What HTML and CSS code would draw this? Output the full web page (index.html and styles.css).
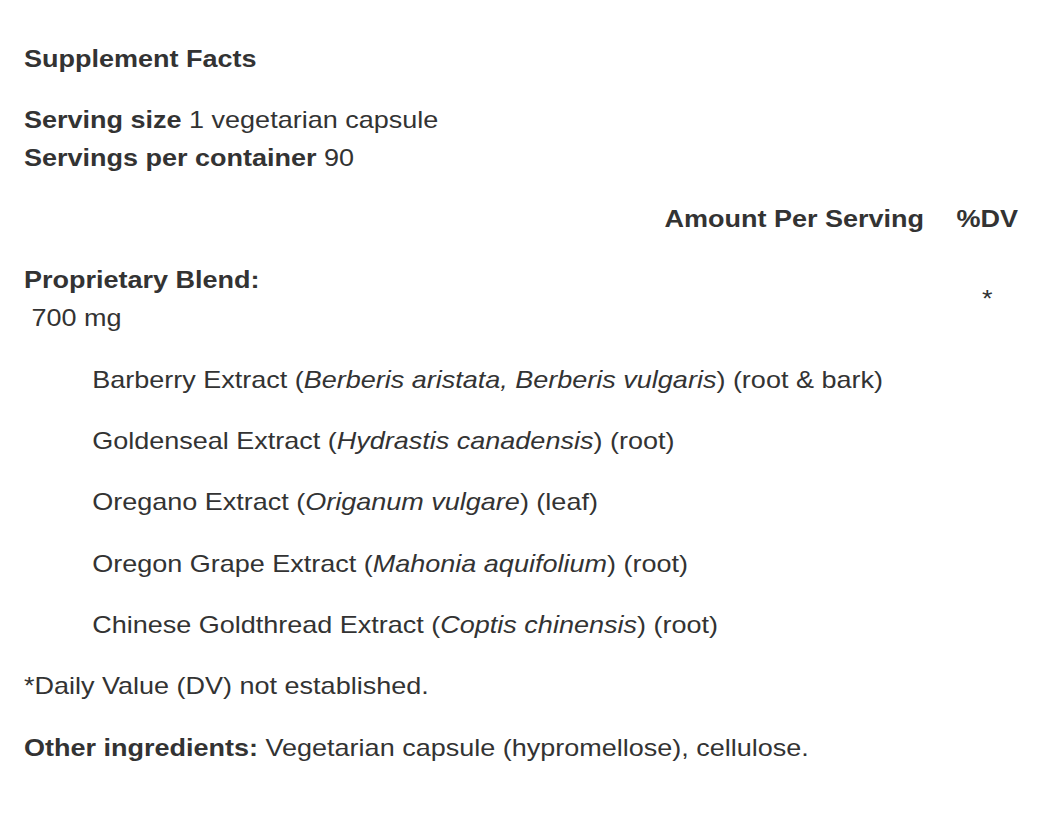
FILE: index.html
```html
<!DOCTYPE html>
<html lang="en">
<head>
<meta charset="utf-8">
<title>Supplement Facts</title>
<link rel="stylesheet" href="styles.css">
</head>
<body>
<main class="page">
  <div class="sheet">
    <h2 class="title">Supplement Facts</h2>
    <p class="serving"><b>Serving size</b> 1 vegetarian capsule<br><b>Servings per container</b> 90</p>
    <div class="facts">
      <div class="row head"><span class="amt">Amount Per Serving</span><span class="dv">%DV</span></div>
      <div class="row blend"><div class="name"><b>Proprietary Blend:</b><br>&nbsp;700 mg</div><span class="dv">*</span></div>
      <div class="row ing"><span class="name">Barberry Extract (<i>Berberis aristata, Berberis vulgaris</i>) (root &amp; bark)</span></div>
      <div class="row ing"><span class="name">Goldenseal Extract (<i>Hydrastis canadensis</i>) (root)</span></div>
      <div class="row ing"><span class="name">Oregano Extract (<i>Origanum vulgare</i>) (leaf)</span></div>
      <div class="row ing"><span class="name">Oregon Grape Extract (<i>Mahonia aquifolium</i>) (root)</span></div>
      <div class="row ing"><span class="name">Chinese Goldthread Extract (<i>Coptis chinensis</i>) (root)</span></div>
    </div>
    <p class="note">*Daily Value (DV) not established.</p>
    <p class="other"><b>Other ingredients:</b> Vegetarian capsule (hypromellose), cellulose.</p>
  </div>
</main>
</body>
</html>
```

FILE: styles.css
```css
html, body {
  margin: 0;
  padding: 0;
  background: #ffffff;
}

body {
  font-family: "Liberation Sans", Arial, sans-serif;
  font-size: 24px;
  line-height: 38px;
  color: #333333;
}

.page {
  padding: 39.6px 24px 0 24px;
}

.sheet {
  width: 889px;
  transform: scaleX(1.125);
  transform-origin: 0 0;
  display: flex;
  flex-direction: column;
  gap: 23.3px;
}

.title,
.serving,
.note,
.other {
  margin: 0;
  font-size: 24px;
  line-height: 38px;
}

.title {
  font-weight: bold;
}

.facts {
  display: flex;
  flex-direction: column;
  gap: 23.3px;
}

.row {
  display: flex;
  align-items: center;
}

.head {
  justify-content: flex-end;
  font-weight: bold;
}

.amt {
  margin-right: 23.3px;
}

.dv {
  flex: none;
  width: 65.6px;
  text-align: center;
}

.blend .name {
  flex: 1;
}

.ing {
  padding-left: 60.6px;
}
```
